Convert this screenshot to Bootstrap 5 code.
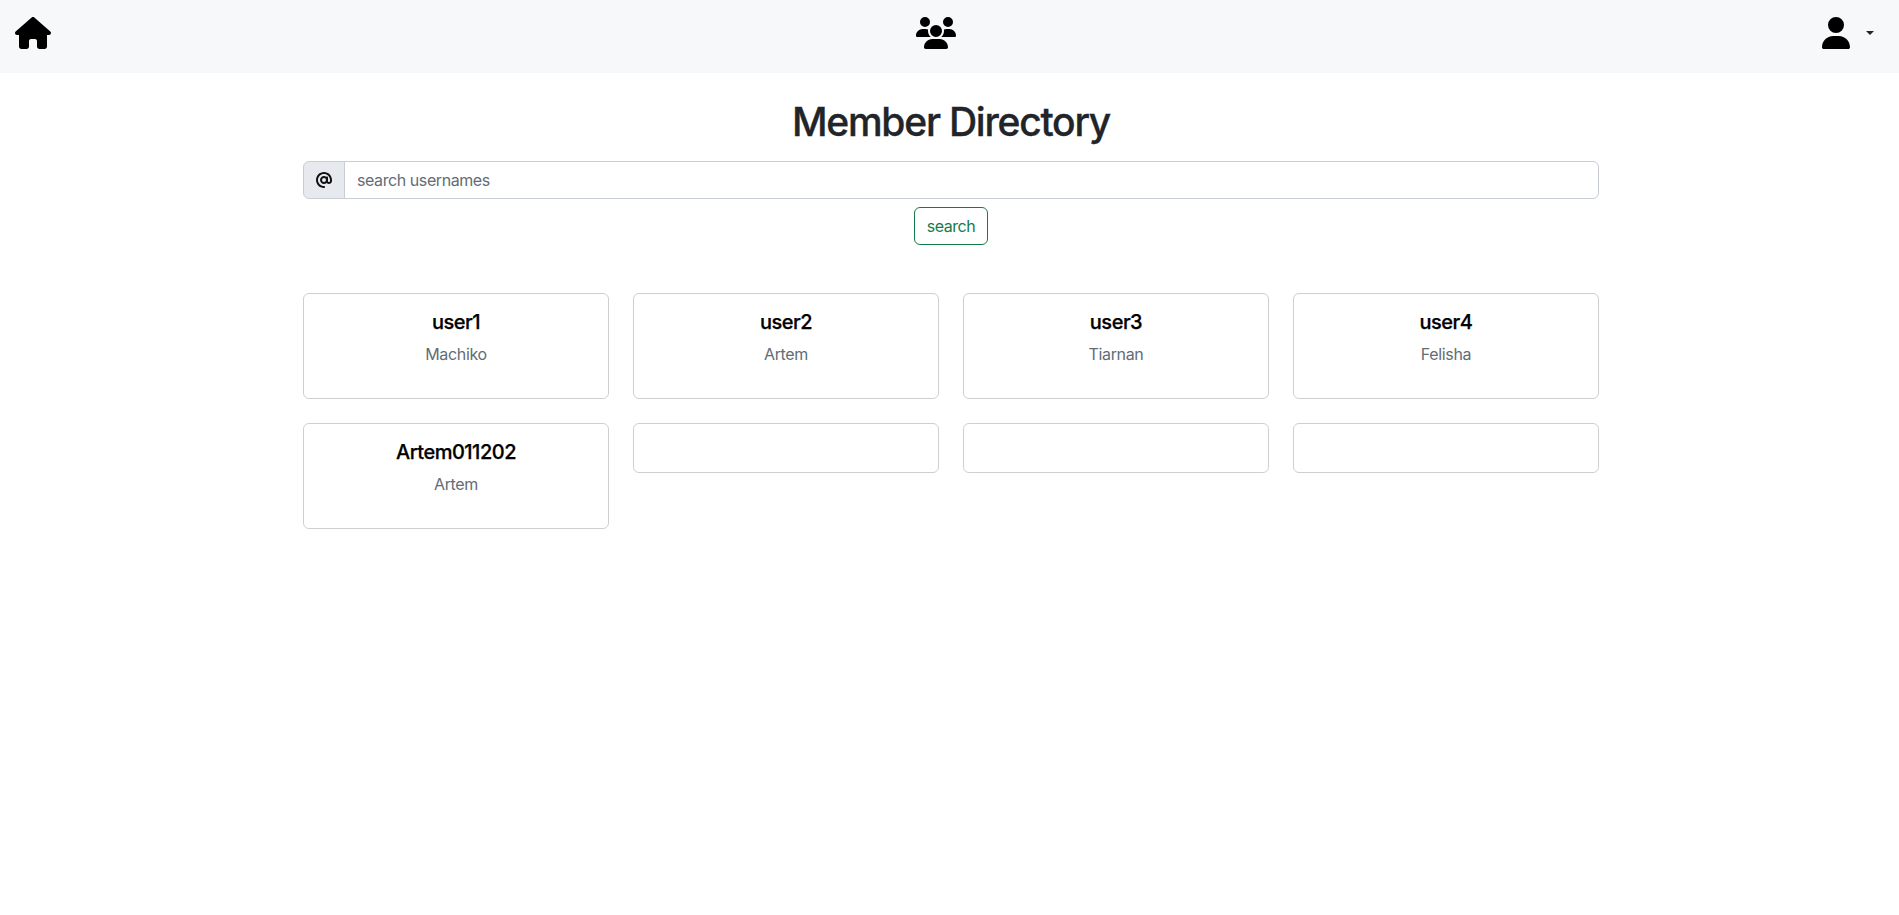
<!DOCTYPE html>
<html lang="en">
<head>
<meta charset="utf-8">
<meta name="viewport" content="width=device-width, initial-scale=1">
<title>Member Directory</title>
<link href="https://cdn.jsdelivr.net/npm/bootstrap@5.3.0/dist/css/bootstrap.min.css" rel="stylesheet">
<style>
  body { font-family: Inter, "Liberation Sans", sans-serif; }
  .topbar { height: 73px; background: #f7f8fa; padding: 17px 25px 0 15px; }
  .topbar svg { display: block; height: 32px; fill: #000; }
  .topbar .people { margin-right: 1px; }
  .topbar .dropdown-toggle { color: #212529; }
  .topbar .dropdown-toggle::after { margin-left: 16.4px; border-top-width: 4px; border-right-width: 4px; border-left-width: 4px; }
  .directory { padding-left: 3px; }
  .page-title { font-size: 39px; font-weight: 500; line-height: 48px; margin: 25px 0 15px; letter-spacing: -1.24px; -webkit-text-stroke: .35px #212529; }
  .input-group-text { background: #e6e9ed; border-color: #c8cdd5; }
  .form-control { border-color: #c8cdd5; letter-spacing: -.42px; }
  .form-control::placeholder { color: #636c75; }
  .search-btn { --bs-btn-color: #177a4b; --bs-btn-border-color: #177a4b; letter-spacing: -.45px; padding-left: 11.5px; padding-right: 11.5px; }
  .member { --bs-card-border-color: #cfcfcf; }
  .member .card-title { color: #000; font-weight: 500; letter-spacing: -.5px; -webkit-text-stroke: .25px #000; }
  .member .card-text { color: #636c75; letter-spacing: -.36px; }
</style>
</head>
<body>
<nav class="topbar d-flex justify-content-between align-items-start">
  <a href="#" aria-label="Home"><svg width="36" viewBox="0 0 576 512"><path d="M575.8 255.5c0 18-15 32.1-32 32.1h-32l.7 160.2c0 2.7-.2 5.4-.5 8.1V472c0 22.1-17.9 40-40 40H456c-1.1 0-2.2 0-3.3-.1c-1.4 .1-2.8 .1-4.2 .1H416 392c-22.1 0-40-17.9-40-40V448 384c0-17.7-14.3-32-32-32H256c-17.7 0-32 14.3-32 32v64 24c0 22.1-17.9 40-40 40H160 128.1c-1.5 0-3-.1-4.5-.2c-1.2 .1-2.4 .2-3.6 .2H104c-22.1 0-40-17.9-40-40V360c0-.9 0-1.9 .1-2.8V287.6H32c-18 0-32-14-32-32.1c0-9 3-17 10-24L266.4 8c7-7 15-8 22-8s15 2 21 7L564.8 231.5c8 7 12 15 11 24z"/></svg></a>
  <a href="#" class="people" aria-label="Members"><svg width="40" viewBox="0 0 640 512"><path d="M144 0a80 80 0 1 1 0 160A80 80 0 1 1 144 0zM512 0a80 80 0 1 1 0 160A80 80 0 1 1 512 0zM0 298.7C0 239.8 47.8 192 106.7 192h42.7c15.9 0 31 3.5 44.6 9.7c-1.3 7.2-1.9 14.7-1.9 22.3c0 38.2 16.8 72.5 43.3 96c-.2 0-.4 0-.7 0H21.3C9.6 320 0 310.4 0 298.7zM405.3 320c-.2 0-.4 0-.7 0c26.6-23.5 43.3-57.8 43.3-96c0-7.6-.7-15-1.9-22.3c13.6-6.3 28.7-9.7 44.6-9.7h42.7C592.2 192 640 239.8 640 298.7c0 11.8-9.6 21.3-21.3 21.3H405.3zM224 224a96 96 0 1 1 192 0 96 96 0 1 1 -192 0zM128 485.3C128 411.7 187.7 352 261.3 352H378.7C452.3 352 512 411.7 512 485.3c0 14.7-11.9 26.7-26.7 26.7H154.7c-14.7 0-26.7-11.9-26.7-26.7z"/></svg></a>
  <a href="#" class="dropdown-toggle d-flex align-items-center" data-bs-toggle="dropdown" aria-label="Account"><svg width="28" viewBox="0 0 448 512"><path d="M224 256A128 128 0 1 0 224 0a128 128 0 1 0 0 256zm-45.7 48C79.8 304 0 383.8 0 482.3C0 498.7 13.3 512 29.7 512H418.3c16.4 0 29.7-13.3 29.7-29.7C448 383.8 368.2 304 269.7 304H178.3z"/></svg></a>
</nav>
<main class="directory">
  <div class="container text-center">
    <h1 class="page-title">Member Directory</h1>
    <form>
      <div class="input-group">
        <span class="input-group-text"><svg width="16" height="16" viewBox="0 0 512 512" fill="#111"><path d="M256 64C150 64 64 150 64 256s86 192 192 192c17.7 0 32 14.3 32 32s-14.3 32-32 32C114.6 512 0 397.4 0 256S114.6 0 256 0S512 114.6 512 256v32c0 53-43 96-96 96c-29.3 0-55.6-13.2-73.2-33.9C320 371.1 289.5 384 256 384c-70.7 0-128-57.3-128-128s57.3-128 128-128c27.9 0 53.7 8.9 74.7 24.1c5.7-5 13.1-8.1 21.3-8.1c17.7 0 32 14.3 32 32v80 32c0 17.7 14.3 32 32 32s32-14.3 32-32V256c0-106-86-192-192-192zm64 192a64 64 0 1 0 -128 0 64 64 0 1 0 128 0z"/></svg></span>
        <input type="text" class="form-control" placeholder="search usernames">
      </div>
      <button type="button" class="btn btn-outline-success search-btn mt-2">search</button>
    </form>
    <div class="row row-cols-4 gy-4 mt-4 align-items-start">
      <div class="col"><div class="card member"><div class="card-body"><h5 class="card-title">user1</h5><p class="card-text mb-3">Machiko</p></div></div></div>
      <div class="col"><div class="card member"><div class="card-body"><h5 class="card-title">user2</h5><p class="card-text mb-3">Artem</p></div></div></div>
      <div class="col"><div class="card member"><div class="card-body"><h5 class="card-title">user3</h5><p class="card-text mb-3">Tiarnan</p></div></div></div>
      <div class="col"><div class="card member"><div class="card-body"><h5 class="card-title">user4</h5><p class="card-text mb-3">Felisha</p></div></div></div>
      <div class="col"><div class="card member"><div class="card-body"><h5 class="card-title">Artem011202</h5><p class="card-text mb-3">Artem</p></div></div></div>
      <div class="col"><div class="card member"><div class="card-body"><p class="card-text mb-3"></p></div></div></div>
      <div class="col"><div class="card member"><div class="card-body"><p class="card-text mb-3"></p></div></div></div>
      <div class="col"><div class="card member"><div class="card-body"><p class="card-text mb-3"></p></div></div></div>
    </div>
  </div>
</main>
<script src="https://cdn.jsdelivr.net/npm/bootstrap@5.3.0/dist/js/bootstrap.bundle.min.js"></script>
</body>
</html>
